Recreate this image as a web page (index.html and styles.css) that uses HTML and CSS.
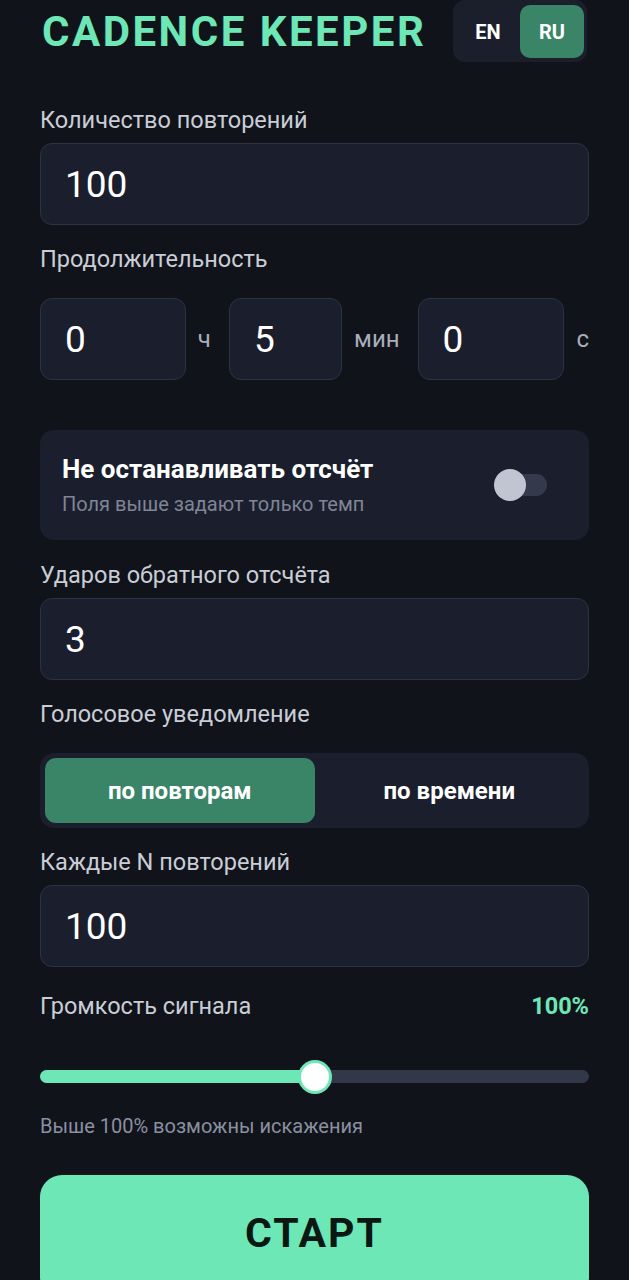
FILE: index.html
```html
<!DOCTYPE html>
<html lang="ru">
  <head>
    <meta charset="UTF-8" />
    <meta name="viewport" content="width=device-width, initial-scale=1.0" />
    <title>Cadence Keeper</title>
    <link rel="stylesheet" href="styles.css">
  </head>
  <body>
    <div class="app">
      <header class="header">
        <h1 class="title">CADENCE KEEPER</h1>
        <div class="lang">
          <button class="lang-btn">EN</button>
          <button class="lang-btn active">RU</button>
        </div>
      </header>

      <label class="label">Количество повторений</label>
      <div class="input">100</div>

      <label class="label">Продолжительность</label>
      <div class="duration">
        <div class="input hours">0</div>
        <span class="unit">ч</span>
        <div class="input minutes">5</div>
        <span class="unit">мин</span>
        <div class="input seconds">0</div>
        <span class="unit last">с</span>
      </div>

      <div class="card">
        <div>
          <div class="card-title">Не останавливать отсчёт</div>
          <div class="card-sub">Поля выше задают только темп</div>
        </div>
        <div class="switch"><span class="knob"></span></div>
      </div>

      <label class="label">Ударов обратного отсчёта</label>
      <div class="input">3</div>

      <label class="label">Голосовое уведомление</label>
      <div class="segment">
        <button class="seg-btn active">по повторам</button>
        <button class="seg-btn">по времени</button>
      </div>

      <label class="label">Каждые N повторений</label>
      <div class="input">100</div>

      <div class="volume-row">
        <span class="label">Громкость сигнала</span>
        <span class="volume-value">100%</span>
      </div>
      <div class="slider">
        <div class="slider-fill" style="width: 50%"></div>
        <span class="slider-thumb" style="left: 50%"></span>
      </div>
      <div class="hint">Выше 100% возможны искажения</div>

      <button class="start">СТАРТ</button>
    </div>
  </body>
</html>
```

FILE: styles.css
```css
body {
  margin: 0;
  background-color: #10131a;
  font-family: Roboto, "Noto Sans", sans-serif;
  color: #fff;
}
.app {
  display: flex;
  flex-direction: column;
  padding: 0 40px;
}
.header {
  display: flex;
  align-items: center;
  justify-content: space-between;
  margin-bottom: 45px;
}
.title {
  margin: 0 0 0 2px;
  font-size: 42px;
  font-weight: 700;
  letter-spacing: 2.5px;
  color: #6ee7b7;
}
.lang {
  display: flex;
  gap: 2px;
  padding: 5px 3px 4px 5px;
  margin-right: 2px;
  background-color: #1b1f2c;
  border-radius: 12px;
}
.lang-btn {
  width: 60px;
  height: 53px;
  border: none;
  border-radius: 10px;
  background: none;
  color: #fff;
  font-family: inherit;
  font-size: 20px;
  font-weight: 700;
}
.lang-btn.active {
  width: 64px;
  background-color: #3a8468;
}
.label {
  display: block;
  font-size: 23.5px;
  line-height: 26px;
  color: #c9cdd6;
  margin-bottom: 10px;
}
.input {
  box-sizing: border-box;
  height: 82px;
  display: flex;
  align-items: center;
  padding-left: 24px;
  background-color: #1b1f2d;
  border: 1px solid #2c3242;
  border-radius: 12px;
  font-size: 37px;
  margin-bottom: 21px;
}
.duration {
  display: flex;
  align-items: center;
  margin: 16px 0 50px;
}
.duration .input {
  margin-bottom: 0;
}
.input.hours {
  width: 147px;
}
.input.minutes {
  width: 114px;
}
.input.seconds {
  width: 148px;
}
.unit {
  font-size: 24px;
  color: #a9aebb;
  margin: 0 18px 0 12px;
}
.unit.last {
  margin-right: 0;
}
.card {
  display: flex;
  align-items: center;
  justify-content: space-between;
  height: 110px;
  box-sizing: border-box;
  padding: 0 42px 0 22px;
  background-color: #1b1f2d;
  border-radius: 14px;
  margin-bottom: 22px;
}
.card-title {
  font-size: 26px;
  line-height: 30px;
  font-weight: 700;
  margin-bottom: 8px;
}
.card-sub {
  font-size: 20px;
  line-height: 24px;
  color: #7f8596;
}
.switch {
  position: relative;
  width: 50px;
  height: 22px;
  background-color: #343a4b;
  border-radius: 11px;
}
.knob {
  position: absolute;
  left: -3px;
  top: -5px;
  width: 32px;
  height: 32px;
  border-radius: 50%;
  background-color: #c1c4d1;
}
.segment {
  display: flex;
  padding: 5px;
  margin: 16px 0 21px;
  background-color: #1b1f2d;
  border-radius: 14px;
}
.seg-btn {
  flex: 1;
  height: 65px;
  border: none;
  border-radius: 11px;
  background: none;
  color: #fff;
  font-family: inherit;
  font-size: 24px;
  font-weight: 700;
}
.seg-btn.active {
  background-color: #3a8468;
}
.volume-row {
  display: flex;
  justify-content: space-between;
  align-items: baseline;
  margin-top: 4px;
}
.volume-row .label {
  margin-bottom: 0;
}
.volume-value {
  font-size: 23.5px;
  font-weight: 700;
  color: #6ee7b7;
}
.slider {
  position: relative;
  height: 13px;
  margin: 50px 0 31px;
  background-color: #323848;
  border-radius: 7px;
}
.slider-fill {
  height: 100%;
  background-color: #6ee7b7;
  border-radius: 7px;
}
.slider-thumb {
  position: absolute;
  top: 50%;
  width: 28px;
  height: 28px;
  border: 3px solid #6ee7b7;
  border-radius: 50%;
  background-color: #fff;
  transform: translate(-50%, -50%);
}
.hint {
  font-size: 20px;
  line-height: 24px;
  color: #8a90a0;
  margin-bottom: 37px;
}
.start {
  flex-shrink: 0;
  height: 125px;
  border: none;
  border-radius: 22px;
  background-color: #6ee7b7;
  color: #0b1712;
  font-family: inherit;
  font-size: 41px;
  font-weight: 700;
  letter-spacing: 2px;
  padding-bottom: 10px;
}
```
